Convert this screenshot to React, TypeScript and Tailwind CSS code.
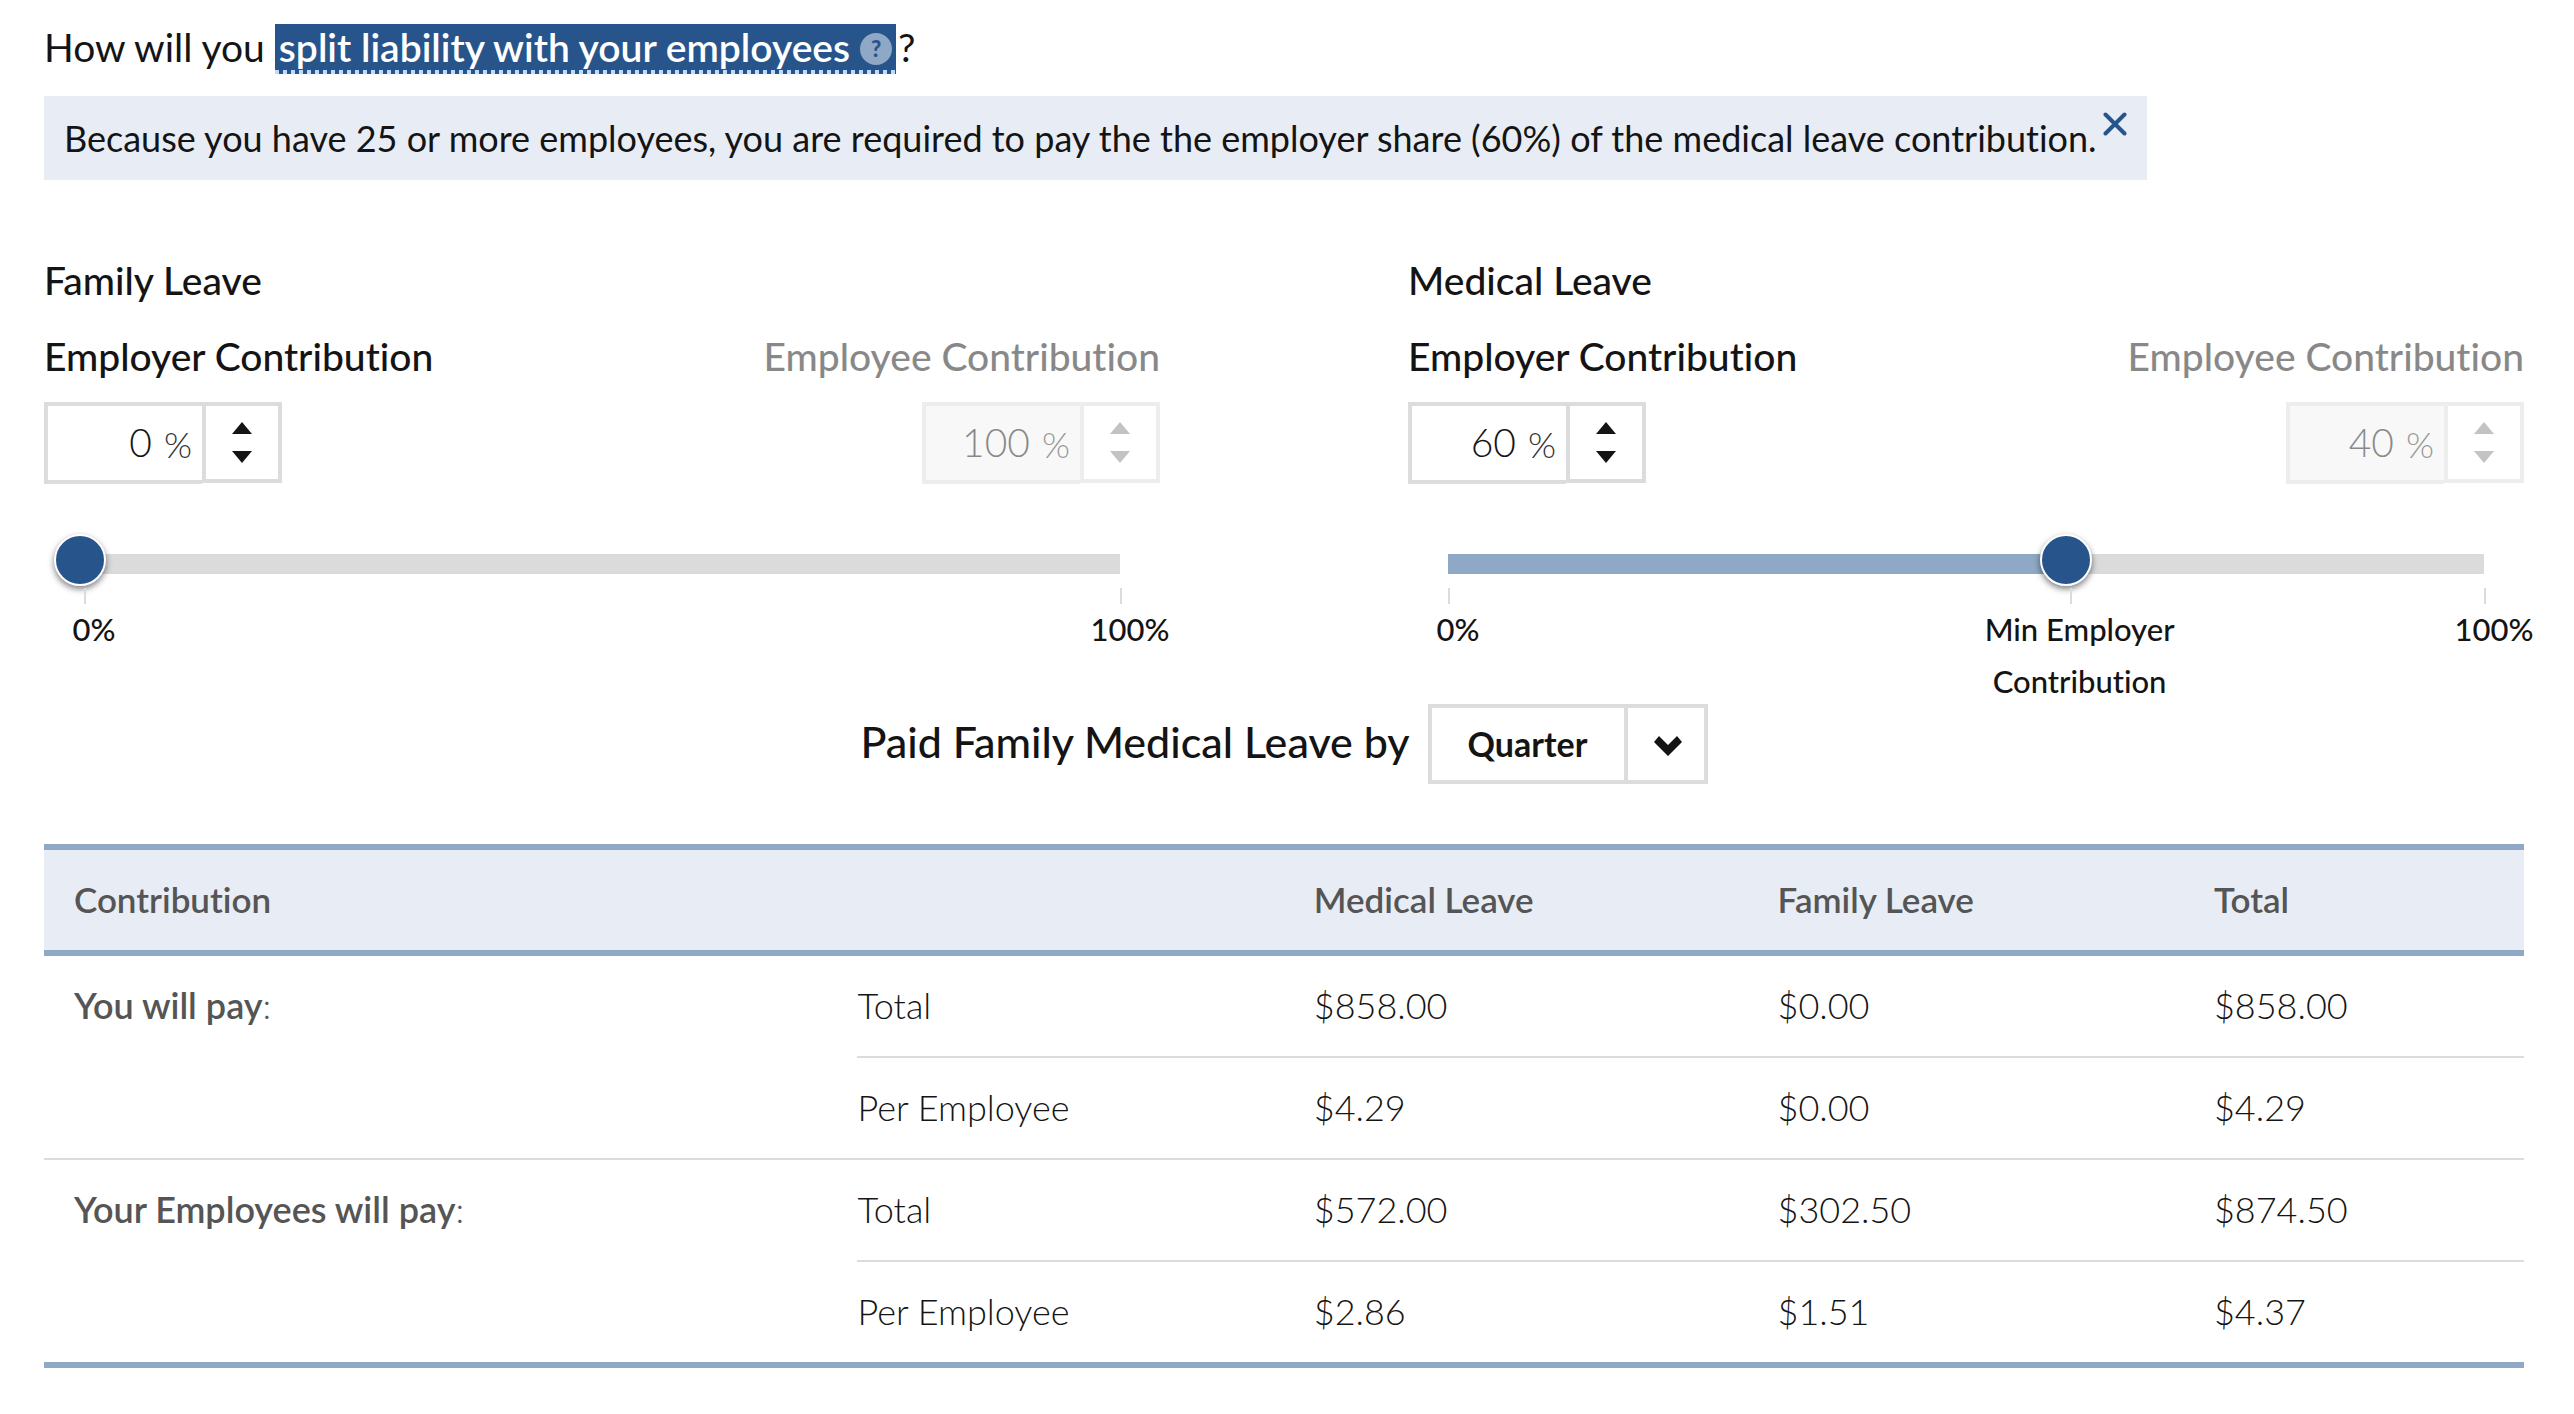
import { useState } from "react";

type Mark = { at: number; label: string };

function Stepper({
  id,
  label,
  value,
  disabled = false,
  onChange,
}: {
  id: string;
  label: string;
  value: number;
  disabled?: boolean;
  onChange?: (value: number) => void;
}) {
  const set = (next: number) => onChange?.(Math.min(100, Math.max(0, next || 0)));
  return (
    <div className={disabled ? "flex flex-col items-end opacity-50" : "flex flex-col items-start"}>
      <label htmlFor={id} className="mb-2 text-[39px] leading-[76px] font-medium">
        {label}
      </label>
      <div className="flex items-start">
        <div
          className={
            disabled
              ? "flex h-[82px] w-[158px] items-center border-4 border-r-0 border-[#dcdcdc] bg-[#f2f2f2]"
              : "flex h-[82px] w-[158px] items-center border-4 border-r-0 border-[#dcdcdc] bg-white"
          }
        >
          <input
            id={id}
            type="text"
            inputMode="numeric"
            value={value}
            disabled={disabled}
            onChange={(e) => set(parseInt(e.target.value, 10))}
            className="w-0 grow bg-transparent pr-3 pb-[2px] text-right text-[39px] leading-[72px] font-light outline-none"
          />
          <span className="pt-[2px] pr-[10px] text-[36px] leading-[72px] font-light text-[#333]">%</span>
        </div>
        <div className="flex h-[81px] w-20 flex-col border-4 border-[#dcdcdc] bg-white">
          <button
            type="button"
            aria-label={`Increase ${label}`}
            disabled={disabled}
            onClick={() => set(value + 1)}
            className="flex grow items-end justify-center pb-[9px]"
          >
            <svg viewBox="0 0 20 12" className={disabled ? "h-3 w-5 fill-[#888]" : "h-3 w-5 fill-[#141414]"}>
              <path d="M10 0 20 12H0Z" />
            </svg>
          </button>
          <button
            type="button"
            aria-label={`Decrease ${label}`}
            disabled={disabled}
            onClick={() => set(value - 1)}
            className="flex grow items-start justify-center pt-2"
          >
            <svg viewBox="0 0 20 12" className={disabled ? "h-3 w-5 fill-[#888]" : "h-3 w-5 fill-[#141414]"}>
              <path d="M0 0H20L10 12Z" />
            </svg>
          </button>
        </div>
      </div>
    </div>
  );
}

function LeaveSplit({ id, title, initial, marks }: { id: string; title: string; initial: number; marks: Mark[] }) {
  const [value, setValue] = useState(initial);
  return (
    <section>
      <h2 className="text-[39px] leading-[76px] font-medium">{title}</h2>
      <div className="flex justify-between">
        <Stepper id={`${id}-employer`} label="Employer Contribution" value={value} onChange={setValue} />
        <Stepper id={`${id}-employee`} label="Employee Contribution" value={100 - value} disabled />
      </div>
      <div className="mx-10 mt-[70px]">
        <div className="relative h-5 bg-[#dbdbdb]">
          <div className="h-5 bg-[#8fa8c5]" style={{ width: `${value}%` }} />
          <input
            type="range"
            min={0}
            max={100}
            value={value}
            aria-label={`${title} employer share`}
            onChange={(e) => setValue(Number(e.target.value))}
            className="absolute -top-5 -right-[22px] -left-[30px] h-[52px] cursor-pointer appearance-none bg-transparent [&::-webkit-slider-thumb]:size-[52px] [&::-webkit-slider-thumb]:appearance-none [&::-webkit-slider-thumb]:rounded-full [&::-webkit-slider-thumb]:border-2 [&::-webkit-slider-thumb]:border-white [&::-webkit-slider-thumb]:bg-[#27558b] [&::-webkit-slider-thumb]:shadow-[0_3px_6px_rgba(0,0,0,0.5)]"
          />
        </div>
        <div className="relative mt-[14px] h-[116px]">
          {marks.map((mark) => (
            <div key={mark.label} className="absolute top-0" style={{ left: `${mark.at}%` }}>
              <div className="mb-[-1px] h-4 w-[2px] bg-[#dbdbdb]" />
              <div className="ml-[10px] w-[204px] -translate-x-1/2 text-center text-[31px] leading-[52px] font-medium">
                {mark.label}
              </div>
            </div>
          ))}
        </div>
      </div>
    </section>
  );
}

const groups = [
  {
    name: "You will pay",
    rows: [
      ["Total", "$858.00", "$0.00", "$858.00"],
      ["Per Employee", "$4.29", "$0.00", "$4.29"],
    ],
  },
  {
    name: "Your Employees will pay",
    rows: [
      ["Total", "$572.00", "$302.50", "$874.50"],
      ["Per Employee", "$2.86", "$1.51", "$4.37"],
    ],
  },
];

export default function App() {
  const [noticeOpen, setNoticeOpen] = useState(true);
  return (
    <main className="min-h-screen bg-white pt-6 pr-[50px] pb-[46px] pl-11 font-['Lato',sans-serif] text-[#141414] [font-variant-ligatures:none]">
      <div className="flex h-[50px] items-start text-[39px] leading-[46px]">
        <span className="pr-[10px]">How will you</span>
        <button type="button" className="flex h-[50px] flex-col bg-[#27558b] font-semibold text-white">
          <span className="flex h-[46px] items-center gap-[10px] px-1">
            split liability with your employees
            <span className="mt-1 flex size-8 items-center justify-center rounded-full bg-[#8fa8c5] text-[22px] leading-8 font-black text-[#27558b]">
              ?
            </span>
          </span>
          <span className="h-1 w-full bg-[repeating-linear-gradient(90deg,#bfdbff_0_4px,#27558b_4px_8px)]" />
        </button>
        <span className="pl-[2px]">?</span>
      </div>

      {noticeOpen && (
        <div className="mt-[22px] flex w-fit items-start bg-[#e8edf5] pr-5 pl-5">
          <p className="text-[36px] leading-[84px]">
            Because you have 25 or more employees, you are required to pay the the employer share (60%) of the medical
            leave contribution.
          </p>
          <button type="button" aria-label="Dismiss" onClick={() => setNoticeOpen(false)} className="mt-4 ml-[6px]">
            <svg viewBox="0 0 24 24" className="size-6 stroke-[#27558b]" strokeWidth="4" strokeLinecap="round">
              <path d="M2.5 2.5 21.5 21.5M21.5 2.5 2.5 21.5" />
            </svg>
          </button>
        </div>
      )}

      <div className="mt-[62px] grid grid-cols-2 gap-x-[248px]">
        <LeaveSplit
          id="family"
          title="Family Leave"
          initial={0}
          marks={[
            { at: 0, label: "0%" },
            { at: 100, label: "100%" },
          ]}
        />
        <LeaveSplit
          id="medical"
          title="Medical Leave"
          initial={60}
          marks={[
            { at: 0, label: "0%" },
            { at: 60, label: "Min Employer Contribution" },
            { at: 100, label: "100%" },
          ]}
        />
      </div>

      <div className="flex items-center justify-center gap-[18px]">
        <label htmlFor="period" className="pb-1 text-[43px] leading-[76px] font-medium">
          Paid Family Medical Leave by
        </label>
        <div className="relative">
          <select
            id="period"
            defaultValue="Quarter"
            className="block h-20 w-[280px] appearance-none border-4 border-[#dcdcdc] bg-white pb-[2px] pl-9 text-[34px] font-bold"
          >
            <option>Quarter</option>
            <option>Year</option>
          </select>
          <div className="pointer-events-none absolute inset-y-0 right-0 flex w-[84px] items-center justify-center border-l-4 border-[#dcdcdc] pt-1">
            <svg viewBox="0 0 28 20" className="h-5 w-7 fill-[#141414]">
              <path d="M5 0 14 9 23 0 28 6 14 20 0 6Z" />
            </svg>
          </div>
        </div>
      </div>

      <table className="mt-[60px] w-full table-fixed border-separate border-spacing-0 border-b-6 border-[#8fa8c5] text-left text-[36px] leading-[50px]">
        <colgroup>
          <col className="w-[32.8%]" />
          <col className="w-[18.4%]" />
          <col className="w-[18.7%]" />
          <col className="w-[17.6%]" />
          <col />
        </colgroup>
        <thead className="bg-[#e8edf5] text-[35px] text-[#555]">
          <tr>
            <th scope="col" colSpan={2} className="border-y-6 border-[#8fa8c5] pt-6 pb-[26px] pl-[30px] font-semibold">
              Contribution
            </th>
            {["Medical Leave", "Family Leave", "Total"].map((name) => (
              <th key={name} scope="col" className="border-y-6 border-[#8fa8c5] pt-6 pb-[26px] font-semibold">
                {name}
              </th>
            ))}
          </tr>
        </thead>
        {groups.map((group, g) => (
          <tbody key={group.name}>
            {group.rows.map((row, r) => {
              const last = g === groups.length - 1 && r === group.rows.length - 1;
              return (
                <tr key={row[0]}>
                  {r === 0 && (
                    <th
                      scope="rowgroup"
                      rowSpan={2}
                      className={
                        g === 0
                          ? "border-b-2 border-[#dcdcdc] pt-6 pb-[26px] pl-[30px] align-top font-semibold text-[#555]"
                          : "pt-6 pb-[26px] pl-[30px] align-top font-semibold text-[#555]"
                      }
                    >
                      {group.name}
                      <span className="font-light">:</span>
                    </th>
                  )}
                  {row.map((cell, c) => (
                    <td
                      key={c}
                      className={
                        last ? "pt-6 pb-[26px] font-light" : "border-b-2 border-[#dcdcdc] pt-6 pb-[26px] font-light"
                      }
                    >
                      {cell}
                    </td>
                  ))}
                </tr>
              );
            })}
          </tbody>
        ))}
      </table>
    </main>
  );
}
